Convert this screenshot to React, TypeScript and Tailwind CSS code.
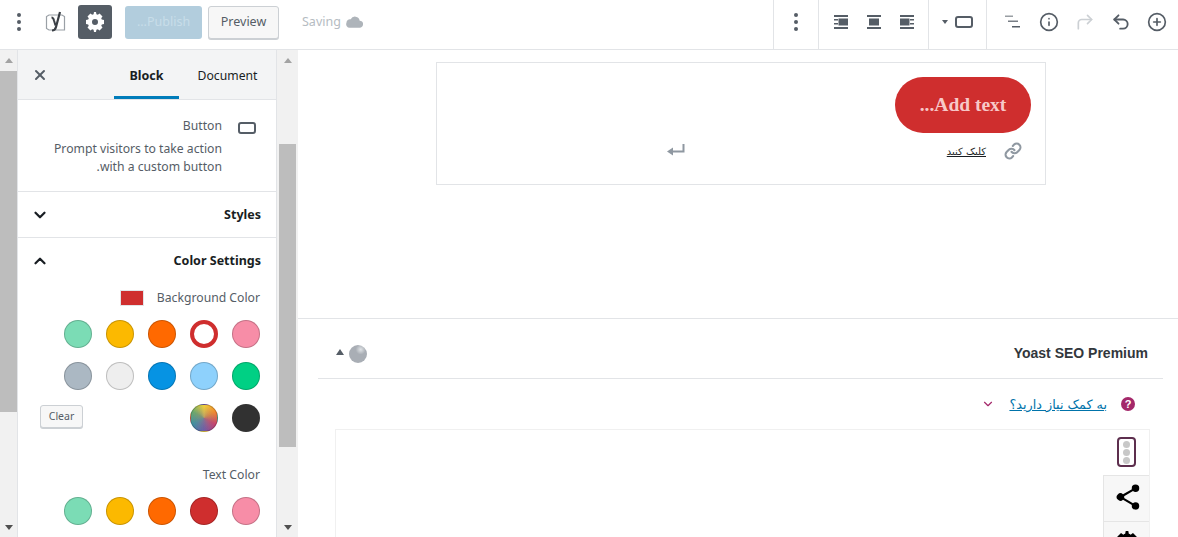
import { CirclePlus, Info, CornerUpRight, Undo2, X, ChevronDown, ChevronUp, Link } from 'lucide-react';

const bgColors = [
    ['bg-[#f78da7]', 'bg-[#cf2e2e]', 'bg-[#ff6900]', 'bg-[#fcb900]', 'bg-[#7bdcb5]'],
    ['bg-[#00d084]', 'bg-[#8ed1fc]', 'bg-[#0693e3]', 'bg-[#eeeeee]', 'bg-[#abb8c3]'],
];
const textColors = ['bg-[#f78da7]', 'bg-[#cf2e2e]', 'bg-[#ff6900]', 'bg-[#fcb900]', 'bg-[#7bdcb5]'];

const gearPath = "M18 12v-4l-2.2-.4a6 6 0 0 0-.6-1.4l1.3-1.8-2.9-2.9-1.8 1.300a6 6 0 0 0-1.400-.6L10 0H8l-.4 2.200a6 6 0 0 0-1.400.6L4.400 1.500 1.500 4.400l1.300 1.800a6 6 0 0 0-.6 1.400L0 8v4l2.200.4a6 6 0 0 0 .6 1.400l-1.300 1.800 2.900 2.900 1.800-1.300a6 6 0 0 0 1.400.6L8 20h2l.4-2.200a6 6 0 0 0 1.400-.6l1.800 1.300 2.900-2.900-1.300-1.800a6 6 0 0 0 .6-1.400zM9 13a3 3 0 1 1 0-6 3 3 0 0 1 0 6z";

function Swatch({ color, selected }: { color: string; selected?: boolean }) {
    if (selected) {
        return (
            <div className="w-7 h-7 rounded-full bg-white border-[4px] border-[#cf2e2e]"></div>
        );
    }
    return <div className={`w-7 h-7 rounded-full border border-black/20 ${color}`}></div>;
}

function Scrollbar({ thumbTop, thumbHeight, className }: { thumbTop: string; thumbHeight: string; className: string }) {
    return (
        <div className={`flex flex-col items-center bg-[#f1f1f1] h-[487px] ${className}`}>
            <div className="w-0 h-0 mt-[8px] border-x-[4px] border-x-transparent border-b-[5px] border-b-[#a3a3a3]"></div>
            <div className={`w-full bg-[#bdbdbd] ${thumbTop} ${thumbHeight}`}></div>
            <div className="mt-auto mb-[7px] w-0 h-0 border-x-[4px] border-x-transparent border-t-[5px] border-t-[#505050]"></div>
        </div>
    );
}

function BlockIcon({ className }: { className?: string }) {
    return (
        <div className={`w-[18px] h-[12px] rounded-[3px] border-2 border-[#555d66] ${className ?? ''}`}></div>
    );
}

function AlignIcon({ kind }: { kind: 'left' | 'center' | 'right' }) {
    return (
        <svg width="20" height="20" viewBox="0 0 20 20" fill="#555d66">
            <rect x="3" y="3" width="14" height="2" />
            <rect x="3" y="15" width="14" height="2" />
            {kind === 'left' && (
                <>
                    <rect x="3" y="7" width="4" height="1.500" />
                    <rect x="3" y="11" width="4" height="1.500" />
                    <rect x="7.500" y="6.500" width="9.500" height="7" />
                </>
            )}
            {kind === 'center' && <rect x="5" y="6.500" width="10" height="7" />}
            {kind === 'right' && (
                <>
                    <rect x="3" y="6.500" width="9.500" height="7" />
                    <rect x="13" y="7" width="4" height="1.500" />
                    <rect x="13" y="11" width="4" height="1.500" />
                </>
            )}
        </svg>
    );
}

function Dots() {
    return (
        <svg width="4" height="18" viewBox="0 0 4 18" fill="#555d66">
            <circle cx="2" cy="2" r="2" />
            <circle cx="2" cy="9" r="2" />
            <circle cx="2" cy="16" r="2" />
        </svg>
    );
}

function TopBar() {
    return (
        <div className="h-[50px] flex items-stretch border-b border-[#e2e4e7] bg-white text-[#555d66]">
            <div className="flex items-center w-[180px] mr-[3px] ml-[8px] pb-[5px]">
                <div className="w-9 flex justify-center"><CirclePlus size={20} strokeWidth={2} /></div>
                <div className="w-9 flex justify-center"><Undo2 size={20} strokeWidth={2.200} /></div>
                <div className="w-9 flex justify-center"><CornerUpRight size={20} strokeWidth={2} className="text-[#ccd0d4]" /></div>
                <div className="w-9 flex justify-center"><Info size={20} strokeWidth={2} /></div>
                <div className="w-9 flex justify-center">
                    <svg width="20" height="20" viewBox="0 0 20 20" fill="#555d66">
                        <rect x="2" y="3.500" width="8" height="1.500" opacity="0.600" />
                        <rect x="5" y="8.500" width="10" height="1.500" opacity="0.800" />
                        <rect x="9" y="14" width="8" height="1.500" />
                    </svg>
                </div>
            </div>
            <div className="w-[59px] flex items-center gap-[7px] border-r border-l border-[#e2e4e7] pr-[13px] pb-[5px]">
                <BlockIcon />
                <div className="w-0 h-0 border-x-[3px] border-x-transparent border-t-[4px] border-t-[#555d66]"></div>
            </div>
            <div className="w-[110px] flex items-center justify-center border-l border-[#e2e4e7] pb-[5px]">
                <div className="w-[33px] flex justify-center"><AlignIcon kind="right" /></div>
                <div className="w-[33px] flex justify-center"><AlignIcon kind="center" /></div>
                <div className="w-[33px] flex justify-center"><AlignIcon kind="left" /></div>
            </div>
            <div className="w-[45px] flex items-center justify-center border-l border-[#e2e4e7] pb-[5px]">
                <Dots />
            </div>

            <div className="mr-auto flex items-center pb-[5px] pl-[1px]">
                <div className="flex items-center gap-[5px] ml-[23px] text-[12.500px] text-[#b5bcc2]">
                    <svg width="17" height="14" viewBox="0 0 18 14" fill="#aeb4ba">
                        <path d="M14.500 5.600A5 5 0 0 0 5 4.200 3.600 3.600 0 0 0 .5 7.800 3.700 3.700 0 0 0 4 13h10.200a3.700 3.700 0 0 0 .3-7.400z" />
                    </svg>
                    <span>Saving</span>
                </div>
                <div className="w-[71px] h-[33px] ml-[6px] flex items-center justify-center rounded-[3px] border border-[#ccd0d4] bg-[#f7f7f7] shadow-[0_1px_0_#ccd0d4] text-[12.500px] text-[#555d66]">
                    Preview
                </div>
                <div className="w-[77px] h-[33px] ml-[13px] flex items-center justify-center rounded-[3px] bg-[#b2cddd] text-[12.500px] text-[#c8dde9]">
                    Publish...
                </div>
                <div className="w-[34px] h-[34px] ml-[5px] flex items-center justify-center rounded-[3px] bg-[#555d66]">
                    <svg width="20" height="20" viewBox="0 0 20 20" fill="white">
                        <path d={gearPath} transform="translate(1 0)" />
                    </svg>
                </div>
                <div className="w-[36px] flex justify-center">
                    <svg width="22" height="22" viewBox="0 0 22 22" fill="none">
                        <path d="M5 4h13l2.500 1.500V19H5l-2.500-1.500V5.500z" stroke="#9aa0a6" strokeWidth="1.200" />
                        <path d="M7.500 6.500c1 0 2 1 2.500 3l1.500 5" stroke="#3a3f45" strokeWidth="2" />
                        <path d="M16 1l-4 15c-.5 2-2 3.500-4 3.500" stroke="#3a3f45" strokeWidth="2.200" />
                    </svg>
                </div>
                <div className="w-[36px] flex justify-center"><Dots /></div>
            </div>
        </div>
    );
}

function Sidebar() {
    return (
        <div className="w-[260px] h-[487px] overflow-hidden border-l border-r border-[#e2e4e7] bg-white text-[#555d66] text-[12.200px] flex flex-col">
            <div className="h-[50px] shrink-0 flex items-stretch bg-[#f3f4f5] border-b border-[#e2e4e7] text-[12.200px] text-[#191e23]">
                <div className="w-[89px] mr-[4px] flex items-center justify-center pt-[3px]">Document</div>
                <div className="w-[65px] mr-[4px] flex items-center justify-center font-bold text-[12.500px] border-b-[3px] border-[#007cba] pt-[6px]">Block</div>
                <div className="mr-auto ml-[14px] flex items-center">
                    <X size={16} strokeWidth={3} className="text-[#555d66]" />
                </div>
            </div>

            <div className="h-[92px] shrink-0 flex gap-4 pr-[20px] pl-4 pt-[17px] border-b border-[#e2e4e7]">
                <BlockIcon className="mt-[5px] shrink-0" />
                <div>
                    <div className="leading-[18px] mb-[5px]">Button</div>
                    <div className="leading-[18px]">Prompt visitors to take action with a custom button.</div>
                </div>
            </div>

            <div className="h-[46px] shrink-0 flex items-center justify-between pr-[15px] pl-4 pt-[1px] border-b border-[#e2e4e7] font-bold text-[12.500px] text-[#191e23]">
                <span>Styles</span>
                <ChevronDown size={18} strokeWidth={3} className="-ml-[3px]" />
            </div>

            <div className="px-4 pt-[14px]">
                <div className="flex items-center justify-between font-bold text-[12.500px] text-[#191e23] -mr-[1px]">
                    <span>Color Settings</span>
                    <ChevronUp size={18} strokeWidth={3} className="-ml-[3px]" />
                </div>
                <div className="flex items-center gap-[13px] mt-[18px]">
                    <span>Background Color</span>
                    <div className="w-[24px] h-[16px] bg-[#cf2e2e] border border-[#e2e4e7]"></div>
                </div>
                {bgColors.map((row, i) => (
                    <div key={i} className={`flex gap-[14px] ${i === 0 ? 'mt-[13px]' : 'mt-[14px]'}`}>
                        {row.map((c, j) => (
                            <Swatch key={j} color={c} selected={i === 0 && j === 1} />
                        ))}
                    </div>
                ))}
                <div className="flex items-center gap-[14px] mt-[14px]">
                    <div className="w-7 h-7 rounded-full bg-[#313131]"></div>
                    <div className="w-7 h-7 rounded-full border border-black/20 bg-[radial-gradient(circle,rgba(150,130,130,0.6),transparent_70%),conic-gradient(#f3d23a,#f38a2c,#c5416f,#6d5ba8,#3f8ea3,#6ba96a,#f3d23a)]"></div>
                    <div className="mr-auto ml-[6px] mb-[3px] w-[43px] h-[23px] flex items-center justify-center rounded-[3px] border border-[#ccd0d4] bg-[#f7f7f7] shadow-[0_1px_0_#ccd0d4] text-[10.500px]">
                        Clear
                    </div>
                </div>
                <div className="mt-[34px]">Text Color</div>
                <div className="flex gap-[14px] mt-[13px]">
                    {textColors.map((c, j) => (
                        <Swatch key={j} color={c} />
                    ))}
                </div>
            </div>
        </div>
    );
}

function Editor() {
    return (
        <div className="w-[880px] h-[487px] overflow-hidden flex flex-col bg-white">
            <div className="h-[269px] shrink-0 border-b border-[#e2e4e7] pt-[12px]">
                <div className="w-[610px] h-[123px] mr-[132px] border border-[#e2e4e7] pt-[14px]">
                    <div className="w-[136px] h-[56px] mr-[14px] flex items-center justify-center rounded-full bg-[#cf2e2e] text-[#f7c8c8] font-['Liberation_Serif',serif] font-bold text-[19.500px]">
                        Add text...
                    </div>
                    <div className="flex items-center mt-[8px] h-[20px] text-[#191e23]">
                        <Link size={18} strokeWidth={2.800} className="mr-[23px] text-[#8f98a1]" />
                        <span className="mr-[18px] pt-[1px] font-['DejaVu_Sans',sans-serif] text-[10px] underline">کلیک کنید</span>
                        <svg width="18" height="14" viewBox="0 0 18 14" className="mr-[262px]">
                            <path d="M16.500 0v7.500H5" fill="none" stroke="#8f98a1" strokeWidth="2" />
                            <path d="M6 3.500L0 7.500l6 4z" fill="#8f98a1" />
                        </svg>
                    </div>
                </div>
            </div>

            <div className="mr-[15px] ml-[20px] pt-[10px] flex items-center justify-between h-[60px] border-b border-[#e2e4e7] shrink-0">
                <span dir="ltr" className="mr-[15px] font-['Liberation_Sans',sans-serif] font-bold text-[14px] text-[#32373c]">Yoast SEO Premium</span>
                <div className="flex items-center gap-[5px] ml-[18px]">
                    <div className="w-[18px] h-[18px] rounded-full bg-[radial-gradient(circle_at_65%_25%,#e0e3e6_0%,#a9aeb5_28%)]"></div>
                    <div className="w-0 h-0 mb-[4px] border-x-[4px] border-x-transparent border-b-[6px] border-b-[#555d66]"></div>
                </div>
            </div>

            <div className="h-[50px] shrink-0 flex items-center mr-[43px]">
                <div className="w-[14px] h-[14px] rounded-full bg-[#a4286a] text-white text-[11px] font-bold flex items-center justify-center font-['Liberation_Sans',sans-serif]">?</div>
                <span className="mr-[14px] pt-[1px] text-[#0073aa] underline font-['DejaVu_Sans',sans-serif] text-[12.800px]">به کمک نیاز دارید؟</span>
                <ChevronDown size={14} className="mr-[14px] text-[#a4286a]" />
            </div>

            <div className="mr-[28px] w-[815px] flex-1 border border-[#f0f0f0] border-b-0 pt-[7px]">
                <div className="w-[46px]">
                    <div className="w-[19px] h-[30px] mr-[13px] mb-[8px] rounded-[4px] border-2 border-[#5d2f4e] flex flex-col items-center justify-center gap-[1px]">
                        <div className="w-[7px] h-[7px] rounded-full bg-[#c8c8c8]"></div>
                        <div className="w-[7px] h-[7px] rounded-full bg-[#c8c8c8]"></div>
                        <div className="w-[7px] h-[7px] rounded-full bg-[#c8c8c8]"></div>
                    </div>
                    <div className="w-[46px] h-[47px] flex items-center justify-center pb-[4px] pl-[2px] bg-[#f7f7f7] border border-[#e5e5e5] border-r-0">
                        <svg width="30" height="30" viewBox="0 0 24 24" fill="black">
                            <path d="M18 16.100c-.8 0-1.500.3-2 .8l-7.100-4.200c.1-.2.100-.5.100-.7s0-.5-.1-.7L16 7.200c.5.500 1.200.8 2 .8a3 3 0 1 0-3-3c0 .2 0 .5.100.7L8 9.800A3 3 0 1 0 8 14.200l7.100 4.200c-.1.200-.1.400-.1.600a3 3 0 1 0 3-2.900z" />
                        </svg>
                    </div>
                    <div className="w-[46px] h-[47px] flex justify-center pt-[9px] bg-[#f7f7f7] border border-[#e5e5e5] border-t-0 border-r-0">
                        <svg width="26" height="26" viewBox="0 0 20 20" fill="black">
                            <path d={gearPath} transform="translate(1 0)" />
                        </svg>
                    </div>
                </div>
            </div>
        </div>
    );
}

export default function App() {
    return (
        <div dir="rtl" className="w-[1178px] h-[537px] overflow-hidden bg-white font-['Noto_Sans',sans-serif]">
            <TopBar />
            <div className="flex">
                <Editor />
                <Scrollbar className="w-[21px] px-[2px]" thumbTop="mt-[81px]" thumbHeight="h-[303px]" />
                <Sidebar />
                <Scrollbar className="w-[17px]" thumbTop="mt-[8px]" thumbHeight="h-[341px]" />
            </div>
        </div>
    );
}
